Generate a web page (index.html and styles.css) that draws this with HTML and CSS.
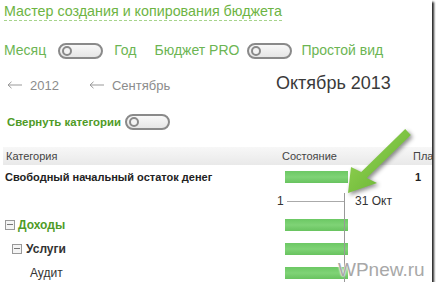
FILE: index.html
```html
<!DOCTYPE html>
<html lang="ru">
<head>
<meta charset="utf-8">
<link rel="stylesheet" href="styles.css">
</head>
<body>
<div class="panel">
  <div class="title"><span class="title-link">Мастер создания и копирования бюджета</span></div>

  <div class="modes">
    <span class="mode">Месяц</span>
    <span class="toggle t-month"><span class="knob"></span></span>
    <span class="mode m-year">Год</span>
    <span class="mode m-pro">Бюджет PRO</span>
    <span class="toggle t-pro"><span class="knob"></span></span>
    <span class="mode m-simple">Простой вид</span>
  </div>

  <div class="nav">
    <div class="nav-links">
      <span class="prev"><svg class="larr" width="15" height="8" viewBox="0 0 15 8"><path d="M15 4H1M4.5 0.8L1 4l3.5 3.2" fill="none" stroke="#999" stroke-width="1"/></svg>2012</span>
      <span class="prev prev-month"><svg class="larr" width="15" height="8" viewBox="0 0 15 8"><path d="M15 4H1M4.5 0.8L1 4l3.5 3.2" fill="none" stroke="#999" stroke-width="1"/></svg>Сентябрь</span>
    </div>
    <div class="month">Октябрь 2013</div>
  </div>

  <div class="collapse">
    <span class="collapse-label">Свернуть категории</span>
    <span class="toggle"><span class="knob"></span></span>
  </div>

  <div class="table">
    <div class="row head">
      <div class="c1">Категория</div>
      <div class="c2">Состояние</div>
      <div class="c3">Пла</div>
    </div>
    <div class="row">
      <div class="c1 strong">Свободный начальный остаток денег</div>
      <div class="c2"><span class="bar"></span></div>
      <div class="c3 strong num">1</div>
    </div>
    <div class="row axis">
      <div class="c1"></div>
      <div class="c2 axis-cell"><span class="ax-start">1</span><span class="ax-line"></span><span class="ax-end">31 Окт</span></div>
      <div class="c3"></div>
    </div>
    <div class="row">
      <div class="c1 cat green"><span class="exp"></span>Доходы</div>
      <div class="c2"><span class="bar"></span></div>
      <div class="c3"></div>
    </div>
    <div class="row">
      <div class="c1 cat sub"><span class="exp"></span>Услуги</div>
      <div class="c2"><span class="bar"></span></div>
      <div class="c3"></div>
    </div>
    <div class="row">
      <div class="c1 leaf">Аудит</div>
      <div class="c2"><span class="bar"></span></div>
      <div class="c3"></div>
    </div>
    <div class="today-line"></div>
  </div>

  <svg class="callout" width="80" height="75" viewBox="0 0 80 75">
    <defs>
      <linearGradient id="ag" x1="0" y1="0" x2="1" y2="1">
        <stop offset="0" stop-color="#9bd85a"/>
        <stop offset="1" stop-color="#5fae2c"/>
      </linearGradient>
    </defs>
    <polygon points="8,68 11,42 21.2,47.1 65.2,4.1 70.8,9.9 26.8,52.9 37,58" fill="url(#ag)"/>
  </svg>

  <div class="watermark">WPnew.ru</div>
</div>
</body>
</html>
```

FILE: styles.css
```css
html, body {
  margin: 0;
  padding: 0;
  background: #fff;
}

.panel {
  position: relative;
  width: 432px;
  height: 282px;
  overflow: hidden;
  background: #fff;
  box-shadow: 2px 2px 2px rgba(0, 0, 0, 0.85);
  font-family: "Liberation Sans", Arial, sans-serif;
  color: #333;
}

.title {
  margin: 2px 0 0 4px;
  height: 20px;
}

.title-link {
  display: inline-block;
  font-size: 14.3px;
  line-height: 18px;
  color: #6db443;
  border-bottom: 1px dashed #a6d38c;
}

.modes {
  display: flex;
  align-items: center;
  height: 17px;
  margin: 20px 0 0 4px;
  font-size: 14px;
  color: #6cb553;
}

.mode { line-height: 17px; }
.m-year { margin-left: 11px; }
.m-pro { margin-left: 18px; }
.m-simple { margin-left: 9px; }

.toggle {
  position: relative;
  box-sizing: border-box;
  display: inline-block;
  width: 45px;
  height: 16px;
  border: 2px solid #8a8a8a;
  border-radius: 8px;
  background: linear-gradient(#f8f8f8, #e6e6e6);
}

.t-month { margin-left: 12px; }
.t-pro { margin-left: 8px; }

.knob {
  position: absolute;
  left: 2px;
  top: 1px;
  box-sizing: border-box;
  width: 10px;
  height: 10px;
  border: 2px solid #8a8a8a;
  border-radius: 50%;
  background: #f4f4f4;
}

.nav {
  display: flex;
  align-items: center;
  height: 20px;
  margin-top: 14px;
}

.nav-links {
  display: flex;
  align-items: center;
  width: 276px;
  padding-top: 4px;
  font-size: 13px;
  color: #8c8c8c;
}

.prev {
  display: inline-flex;
  align-items: center;
  margin-left: 7px;
}

.prev-month { margin-left: 30px; }

.larr { margin-right: 8px; }

.month {
  font-size: 18px;
  color: #3a3a3a;
}

.collapse {
  display: flex;
  align-items: center;
  height: 17px;
  margin: 20px 0 0 7px;
}

.collapse-label {
  font-size: 11.4px;
  font-weight: bold;
  color: #4f9b27;
  margin-right: 4px;
}

.table {
  position: relative;
  margin: 17px 0 0 3px;
}

.row {
  display: grid;
  grid-template-columns: 272px 135px 1fr;
  align-items: center;
  height: 24px;
  font-size: 12px;
  white-space: nowrap;
}

.row.head {
  height: 18px;
  font-size: 11px;
  color: #444;
  background: linear-gradient(#f7f7f7, #e9e9e9);
}

.head .c1 { padding-left: 3px; }
.head .c2 { padding-left: 7px; }
.head .c3 { padding-left: 3px; }

.c1 { padding-left: 2px; }

.strong {
  font-weight: bold;
  font-size: 11px;
  color: #222;
}

.num { padding-left: 5px; }

.bar {
  display: block;
  width: 63px;
  height: 12px;
  margin-left: 10px;
  background: linear-gradient(#6cc864, #7fd376 50%, #68c35f);
}

.axis-cell {
  display: flex;
  align-items: center;
  padding-left: 2px;
}

.ax-start { width: 7px; }

.ax-line {
  width: 57px;
  height: 1px;
  margin-left: 3px;
  background: #aaa;
}

.ax-end { margin-left: 11px; }

.cat {
  display: flex;
  align-items: center;
  font-weight: bold;
}

.green { color: #4f9b27; }
.sub { padding-left: 9px; color: #333; }
.leaf { padding-left: 27px; color: #333; }

.exp {
  position: relative;
  box-sizing: border-box;
  width: 10px;
  height: 10px;
  margin-right: 3px;
  border: 1px solid #999;
  background: #f4f4f4;
}

.exp::after {
  content: "";
  position: absolute;
  left: 1px;
  right: 1px;
  top: 3px;
  height: 1px;
  background: #777;
}

.sub .exp { margin-right: 4px; }

.today-line {
  position: absolute;
  left: 341px;
  top: 46px;
  bottom: 0;
  width: 1px;
  background: #999;
}

.callout {
  position: absolute;
  left: 340px;
  top: 125px;
  filter: drop-shadow(2px 2px 2px rgba(0, 0, 0, 0.45));
}

.watermark {
  position: absolute;
  left: 338px;
  top: 259px;
  font-size: 19px;
  color: #a8a8a8;
  text-shadow: 0 0 2px #fff, 0 0 2px #fff;
}
```
